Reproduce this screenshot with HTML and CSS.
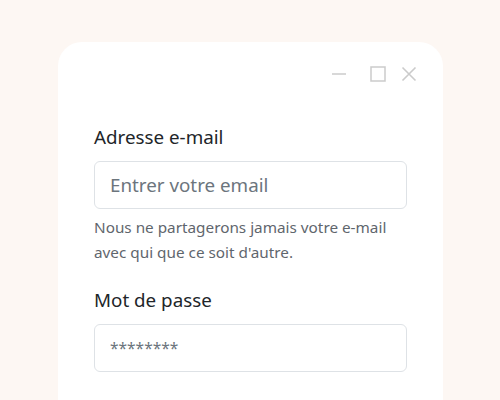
FILE: index.html
```html
<!DOCTYPE html>
<html lang="fr">
<head>
<meta charset="utf-8">
<link rel="stylesheet" href="styles.css">
</head>
<body>
<div class="window">
  <div class="titlebar">
    <svg class="ctl" width="16" height="16" viewBox="0 0 16 16"><path d="M1 8H15" stroke="#cbcbcb" stroke-width="1.5" fill="none"/></svg>
    <svg class="ctl" width="16" height="16" viewBox="0 0 16 16"><rect x="1" y="1" width="14" height="14" stroke="#cbcbcb" stroke-width="1.5" fill="none"/></svg>
    <svg class="ctl" width="16" height="16" viewBox="0 0 16 16"><path d="M1.5 1.5L14.5 14.5M14.5 1.5L1.5 14.5" stroke="#cbcbcb" stroke-width="1.6" fill="none"/></svg>
  </div>
  <form class="form">
    <div class="group">
      <label class="label" for="email">Adresse e-mail</label>
      <input class="input" id="email" type="email" placeholder="Entrer votre email">
      <p class="help">Nous ne partagerons jamais votre e-mail avec qui que ce soit d'autre.</p>
    </div>
    <div class="group">
      <label class="label" for="pwd">Mot de passe</label>
      <input class="input input-pwd" id="pwd" type="text" placeholder="********">
    </div>
  </form>
</div>
</body>
</html>
```
FILE: styles.css
```css
html, body {
  margin: 0;
  background: #fdf7f3;
  font-family: "Noto Sans", "Open Sans", sans-serif;
  color: #212529;
}
.window {
  margin: 42px 0 0 58px;
  width: 385px;
  height: 420px;
  box-sizing: border-box;
  background: #fff;
  border-radius: 24px;
  padding: 0 36px;
}
.titlebar {
  display: flex;
  justify-content: flex-end;
  align-items: center;
  gap: 15px;
  padding-top: 24px;
  margin-right: -10px;
}
.ctl { display: block; }
.ctl:first-child { margin-right: 8px; }
.form {
  margin-top: 43px;
}
.label {
  display: block;
  font-size: 18.8px;
  line-height: 24px;
  margin-bottom: 12px;
}
.input {
  display: block;
  box-sizing: border-box;
  width: 100%;
  height: 48px;
  border: 1px solid #dee2e6;
  border-radius: 6px;
  padding: 0 15px;
  font-family: inherit;
  font-size: 18.8px;
  color: #212529;
  outline: none;
}
.input::placeholder { color: #6c757d; }
.input-pwd { font-size: 15.5px; }
.help {
  margin: 6px 0 0;
  font-size: 15.3px;
  line-height: 25px;
  color: #5f666d;
}
.group + .group { margin-top: 23px; }
```
